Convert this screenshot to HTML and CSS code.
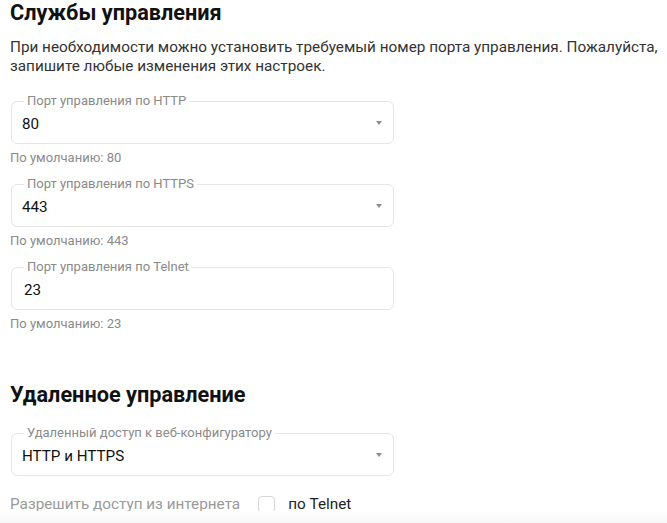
FILE: index.html
```html
<!DOCTYPE html>
<html lang="ru">
<head>
<meta charset="utf-8">
<link rel="stylesheet" href="styles.css">
</head>
<body>
<main class="page">
  <h2 class="title">Службы управления</h2>
  <p class="intro">При необходимости можно установить требуемый номер порта управления. Пожалуйста, запишите любые изменения этих настроек.</p>

  <div class="field first">
    <div class="box select">
      <span class="legend">Порт управления по HTTP</span>
      <span class="value">80</span>
      <span class="arrow"></span>
    </div>
    <div class="hint">По умолчанию: 80</div>
  </div>

  <div class="field">
    <div class="box select">
      <span class="legend">Порт управления по HTTPS</span>
      <span class="value">443</span>
      <span class="arrow"></span>
    </div>
    <div class="hint">По умолчанию: 443</div>
  </div>

  <div class="field">
    <div class="box input">
      <span class="legend">Порт управления по Telnet</span>
      <span class="value">23</span>
    </div>
    <div class="hint">По умолчанию: 23</div>
  </div>

  <h2 class="title second">Удаленное управление</h2>

  <div class="field">
    <div class="box select">
      <span class="legend">Удаленный доступ к веб-конфигуратору</span>
      <span class="value">HTTP и HTTPS</span>
      <span class="arrow"></span>
    </div>
  </div>

  <div class="check-row">
    <span class="check-label">Разрешить доступ из интернета</span>
    <span class="checkbox"></span>
    <span class="check-text">по Telnet</span>
  </div>
</main>
<div class="bottom-fade"></div>
</body>
</html>
```
FILE: styles.css
```css
html, body {
  margin: 0;
  padding: 0;
  background: #fff;
}
body {
  font-family: Roboto, "Noto Sans", "Liberation Sans", sans-serif;
  color: #222;
}
.page {
  padding: 0 4px 0 10px;
}
.title {
  margin: 0;
  font-size: 21.7px;
  line-height: 26px;
  font-weight: 700;
  color: #111;
}
.title.second {
  margin-top: 50px;
}
.intro {
  margin: 12px 0 0 0;
  font-size: 15.3px;
  line-height: 19px;
  color: #333;
}
.field {
  margin-top: 18px;
}
.field.first {
  margin-top: 25px;
}
.title.second + .field {
  margin-top: 25px;
}
.box {
  position: relative;
  margin-left: 1px;
  height: 41px;
  border: 1px solid #e6e6e6;
  border-radius: 6px;
  display: flex;
  align-items: center;
  padding: 0 10px;
  box-sizing: content-box;
  width: 361px;
}
.box.input {
  padding-left: 12px;
  width: 359px;
}
.legend {
  position: absolute;
  left: 12px;
  top: -9px;
  padding: 0 3px;
  background: #fff;
  font-size: 13px;
  line-height: 16px;
  color: #8a8a8a;
}
.value {
  flex: 1;
  font-size: 15.2px;
  line-height: 20px;
  color: #111;
  padding-top: 2px;
}
.arrow {
  width: 0;
  height: 0;
  border-left: 3.5px solid transparent;
  border-right: 3.5px solid transparent;
  border-top: 4px solid #8c8c8c;
  margin-right: 1px;
}
.hint {
  margin-top: 6px;
  font-size: 13px;
  line-height: 16px;
  color: #8a8a8a;
}
.check-row {
  display: flex;
  align-items: center;
  margin-top: 18px;
  height: 20px;
  font-size: 15.3px;
}
.check-label {
  color: #9a9a9a;
  margin-right: 18px;
}
.checkbox {
  width: 15px;
  height: 15px;
  border: 1px solid #d6d6d6;
  border-radius: 4px;
  margin-right: 13px;
}
.check-text {
  color: #222;
}
.bottom-fade {
  position: fixed;
  left: 0;
  right: 0;
  bottom: 0;
  height: 12px;
  background: linear-gradient(#ffffff, #f7f7f7);
  pointer-events: none;
}
```
